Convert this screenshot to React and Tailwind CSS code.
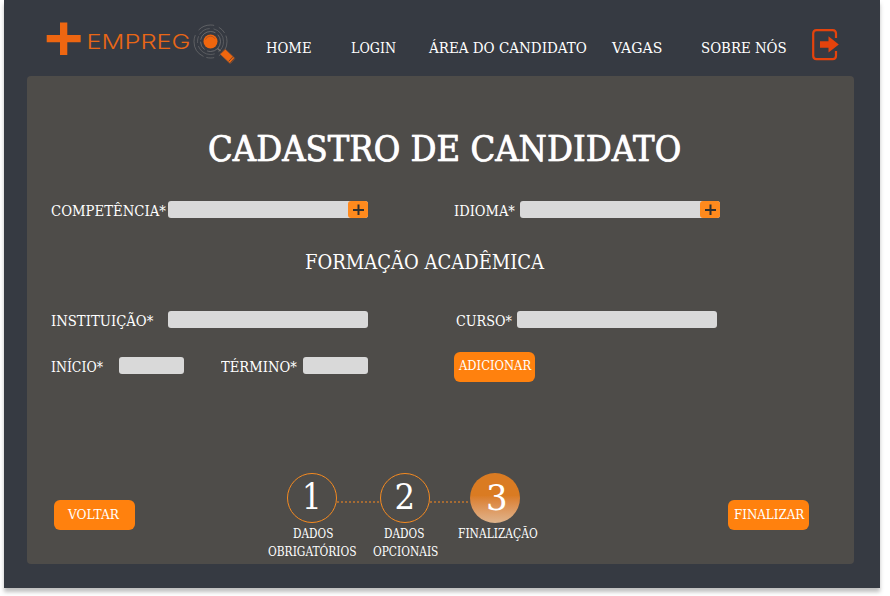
import { useLayoutEffect, useRef, useState } from "react";

const SERIF = "font-['Roboto_Slab','DejaVu_Serif_Condensed','DejaVu_Serif',serif]";

// A single line of text, condensed or widened to fill the width of its box.
function Line({ children, className = "" }) {
  const box = useRef(null);
  const text = useRef(null);
  const [scale, setScale] = useState(1);
  useLayoutEffect(() => {
    setScale(box.current.clientWidth / text.current.offsetWidth);
  }, [children]);
  return (
    <span ref={box} className={`block shrink-0 whitespace-nowrap ${className}`}>
      <span
        ref={text}
        className="inline-block origin-left align-top"
        style={{ transform: `scaleX(${scale})` }}
      >
        {children}
      </span>
    </span>
  );
}

function Logo() {
  return (
    <svg className="mt-5 ml-[41px] h-[46px] w-[192px] shrink-0" viewBox="45 20 192 46">
      <path d="M60 22.500h7.300v12.500h13.400v7.300h-13.400v12.700h-7.300v-12.700h-13.300v-7.300h13.300z" fill="#ee6611" />
      <text
        x="86.500"
        y="49"
        fill="#e96716"
        fontSize="20.600"
        fontWeight="300"
        textLength="104"
        lengthAdjust="spacingAndGlyphs"
        className="font-['Inter',sans-serif]"
      >
        EMPREG
      </text>
      <g fill="none" stroke="#747476" strokeWidth=".8">
        <circle cx="210.500" cy="41.500" r="10" strokeDasharray="19 3 9 2" />
        <circle cx="210.500" cy="41.500" r="13" strokeDasharray="12 4 20 3 7 2" opacity=".7" />
        <circle cx="210.500" cy="41.500" r="16.500" strokeDasharray="17 5 8 3 25 6" opacity=".8" />
      </g>
      <circle cx="210.500" cy="41.500" r="7" fill="#f0660e" />
      <path d="M205.500 39.500a5.300 5.300 0 0 1 9.500-.7" fill="none" stroke="#a85225" strokeWidth=".8" />
      <path d="M217.500 48.500l3 2.500" stroke="#77706b" strokeWidth="1.500" />
      <rect x="-7" y="-3.600" width="14" height="7.200" rx="1" transform="translate(227.500 56.200) rotate(43)" fill="#f0660e" stroke="#805039" strokeWidth=".7" />
      <path d="M220.700 53.500l4.500-4.300M228.700 61.300l4.700-5M230.300 62.700l4.500-4.800" stroke="#4a3d38" strokeWidth=".8" />
    </svg>
  );
}

function ExitIcon() {
  return (
    <svg className="mt-[29px] ml-[25px] h-8 w-7 shrink-0" viewBox="0 0 28 32">
      <path d="M24 9V4.500Q24 1.200 20.700 1.200H4.500Q1.200 1.200 1.200 4.500v22.300q0 3.300 3.300 3.300h16.200q3.300 0 3.300-3.300V22" fill="none" stroke="#e5430c" strokeWidth="2.200" />
      <path d="M8 12.200h8.500V7.300L26.800 15.500 16.500 23.500v-4.800H8z" fill="#e5430c" />
    </svg>
  );
}

function Field({ className, add = false }) {
  return (
    <div className={`flex h-[17px] shrink-0 justify-end rounded-[3px] bg-[#d9d9d9] ${className}`}>
      {add && (
        <button className="flex h-[17px] w-5 items-center justify-center rounded-[3px] bg-[#ff8a1d]">
          <svg className="h-3 w-3" viewBox="0 0 12 12">
            <path d="M6.500.5v10.500M1 6h11" stroke="#303030" strokeWidth="2" />
          </svg>
        </button>
      )}
    </div>
  );
}

function Button({ children, className, textClass }) {
  return (
    <button className={`flex h-[30px] w-[81px] shrink-0 rounded-md bg-[#ff810e] text-[13px] leading-5 ${className}`}>
      <Line className={textClass}>{children}</Line>
    </button>
  );
}

function Dots({ className }) {
  return (
    <svg className={`mt-7 h-[2px] shrink-0 ${className}`}>
      <path d="M0 1h60" stroke="#c4762c" strokeWidth="1.600" strokeDasharray="2 2" />
    </svg>
  );
}

export default function App() {
  return (
    <div className={`h-[596px] w-[890px] overflow-hidden bg-white pl-1 text-left text-white ${SERIF}`}>
      <div className="h-[588px] w-[876px] bg-[#363a42] shadow-[0_4px_4px_rgba(0,0,0,0.25)]">
        <header className="flex h-[76px] items-start">
          <Logo />
          <nav className="mt-[38px] ml-[29px] flex text-[15px] leading-5">
            <Line className="w-[46px]">HOME</Line>
            <Line className="ml-[39px] w-[45px]">LOGIN</Line>
            <Line className="ml-[33px] w-[158px]">ÁREA DO CANDIDATO</Line>
            <Line className="ml-[25px] w-[50px]">VAGAS</Line>
            <Line className="ml-[39px] w-[86px]">SOBRE NÓS</Line>
          </nav>
          <ExitIcon />
        </header>

        <main className="ml-[23px] flex h-[488px] w-[827px] flex-col rounded bg-[#4e4c49]">
          <h1 className="mt-[49px] ml-[181px] text-[36px] leading-[48px] [-webkit-text-stroke:0.5px_white] [text-shadow:0_0_1px_#fff]">
            <Line className="w-[473px]">CADASTRO DE CANDIDATO</Line>
          </h1>

          <div className="mt-7 ml-6 flex h-[17px] text-[15px] leading-[21px]">
            <Line className="w-[115px]">COMPETÊNCIA*</Line>
            <Field add className="ml-[2px] w-[200px]" />
            <Line className="ml-[86px] w-[61px]">IDIOMA*</Line>
            <Field add className="ml-[5px] w-[200px]" />
          </div>

          <h2 className="mt-[30px] ml-[278px] text-[20px] leading-[28px]">
            <Line className="w-[239px]">FORMAÇÃO ACADÊMICA</Line>
          </h2>

          <div className="mt-[35px] ml-6 flex h-[17px] text-[15px] leading-[21px]">
            <Line className="w-[102px]">INSTITUIÇÃO*</Line>
            <Field className="ml-[15px] w-[200px]" />
            <Line className="ml-[88px] w-[56px]">CURSO*</Line>
            <Field className="ml-[5px] w-[200px]" />
          </div>

          <div className="mt-6 ml-6 flex h-[30px] text-[15px] leading-[21px]">
            <Line className="mt-[5px] w-[52px]">INÍCIO*</Line>
            <Field className="mt-[5px] ml-4 w-[65px]" />
            <Line className="mt-[5px] ml-[37px] w-[76px]">TÉRMINO*</Line>
            <Field className="mt-[5px] ml-[6px] w-[65px]" />
            <Button className="ml-[86px] pt-1 pl-[5px]" textClass="w-[72px]">ADICIONAR</Button>
          </div>

          <div className="mt-[91px] ml-[27px] flex">
            <Button className="mt-[27px] pt-[5px] pl-[13px]" textClass="w-[51px]">VOLTAR</Button>
            <ol className="ml-[133px] flex w-[270px] shrink-0 flex-col">
              <li className="flex pl-[19px]">
                <div className="flex size-[50px] shrink-0 justify-center rounded-full border border-[#f58a20] text-[36px] leading-[45px]">
                  <Line className="w-[20px]">1</Line>
                </div>
                <Dots className="w-[43px]" />
                <div className="flex size-[50px] shrink-0 justify-center rounded-full border border-[#f58a20] text-[36px] leading-[45px]">
                  <Line className="w-[21px]">2</Line>
                </div>
                <Dots className="w-10" />
                <div className="flex size-[50px] shrink-0 justify-center rounded-full bg-linear-to-b from-[#da7b22] from-45% to-[#dfb48c] pl-[3px] text-[36px] leading-[49px]">
                  <Line className="w-[22px]">3</Line>
                </div>
              </li>
              <li className="mt-[2px] flex text-[12px] leading-[18px]">
                <div className="flex w-[89px] flex-col items-center">
                  <Line className="w-10">DADOS</Line>
                  <Line className="w-[89px]">OBRIGATÓRIOS</Line>
                </div>
                <div className="ml-4 flex w-[65px] flex-col items-center">
                  <Line className="mr-[3px] w-10">DADOS</Line>
                  <Line className="w-[65px]">OPCIONAIS</Line>
                </div>
                <Line className="ml-5 w-20">FINALIZAÇÃO</Line>
              </li>
            </ol>
            <Button className="mt-[27px] ml-[190px] pt-[5px] pl-[6px]" textClass="w-[70px]">FINALIZAR</Button>
          </div>
        </main>
      </div>
    </div>
  );
}
